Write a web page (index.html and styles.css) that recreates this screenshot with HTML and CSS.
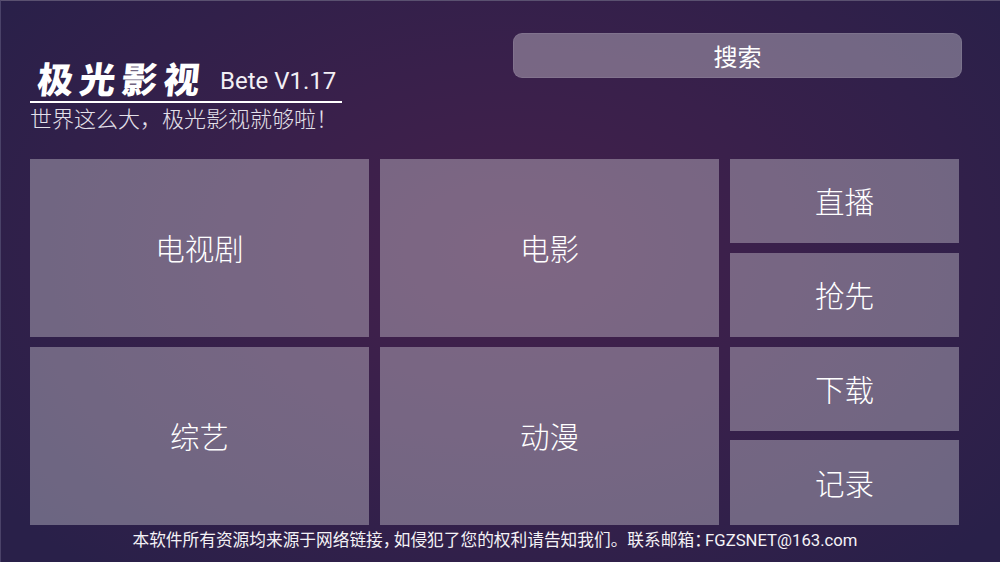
FILE: index.html
```html
<!DOCTYPE html>
<html lang="zh-CN">
<head>
<meta charset="utf-8">
<title>极光影视</title>
<link rel="stylesheet" href="styles.css">
</head>
<body>
<main class="screen">
  <header class="top">
    <div class="brand">
      <div class="brand-line">
        <span class="logo">极光影视</span>
        <span class="version">Bete V1.17</span>
      </div>
      <div class="slogan">世界这么大，极光影视就够啦！</div>
    </div>
    <div class="search">搜索</div>
  </header>
  <nav class="grid">
    <div class="tile large">电视剧</div>
    <div class="tile large">电影</div>
    <div class="stack">
      <div class="tile">直播</div>
      <div class="tile">抢先</div>
    </div>
    <div class="tile large">综艺</div>
    <div class="tile large">动漫</div>
    <div class="stack tight">
      <div class="tile">下载</div>
      <div class="tile">记录</div>
    </div>
  </nav>
  <footer class="foot"><span>本软件所有资源均来源于网络链接<span class="punct">，</span>如侵犯了您的权利请告知我们。联系邮箱<span class="punct">：</span>FGZSNET@163.com</span></footer>
</main>
</body>
</html>
```
FILE: styles.css
```css
* { box-sizing: border-box; }
html, body { margin: 0; height: 100%; }
body { overflow: hidden; background: #2a2048; }
.screen {
  width: 1000px;
  height: 562px;
  padding: 0 38px 0 30px;
  display: flex;
  flex-direction: column;
  color: #fff;
  font-family: Roboto, "Noto Sans CJK SC", sans-serif;
  background: radial-gradient(ellipse 640px 420px at 510px 250px, #44204b 0%, #39204b 45%, #292049 100%);
  border-top: 1px solid #5a5170;
  border-left: 1px solid #4a4268;
}
.top {
  height: 158px;
  display: flex;
  justify-content: space-between;
  align-items: flex-start;
  margin-left: -1px;
}
.brand { width: 312px; margin-top: 57px; }
.brand-line {
  height: 45px;
  display: flex;
  align-items: center;
  padding-left: 8px;
  border-bottom: 2px solid #fff;
}
.logo {
  width: 182px;
  flex: none;
  font-family: "Noto Sans CJK SC", sans-serif;
  font-size: 36px;
  font-weight: 900;
  line-height: 43px;
  letter-spacing: 6px;
  white-space: nowrap;
  transform: translateY(-2px) skewX(-6deg);
}
.version {
  font-size: 24px;
  line-height: 43px;
  padding-top: 3px;
  white-space: nowrap;
  color: #f2eff5;
}
.slogan {
  font-family: "Noto Sans CJK SC", sans-serif;
  font-size: 22px;
  font-weight: 300;
  line-height: 28px;
  white-space: nowrap;
  color: #e4e0ea;
}
.search {
  width: 449px;
  height: 45px;
  margin-top: 32px;
  display: flex;
  align-items: center;
  justify-content: center;
  font-family: "Noto Sans CJK SC", sans-serif;
  font-size: 24px;
  border-radius: 9px;
  border: 1px solid rgba(255,255,255,.08);
  background: rgba(255,255,255,.32);
}
.grid {
  display: grid;
  grid-template-columns: 339px 339px 229px;
  grid-template-rows: 178px 178px;
  column-gap: 11px;
  row-gap: 10px;
  margin-left: -1px;
}
.tile {
  display: flex;
  align-items: center;
  justify-content: center;
  flex: 1;
  padding-bottom: 2px;
  font-family: "Noto Sans CJK SC", sans-serif;
  font-size: 29.5px;
  font-weight: 300;
  background: rgba(255,255,255,.315);
}
.stack { display: flex; flex-direction: column; gap: 10px; }
.stack.tight { gap: 9px; }
.stack.tight .tile:first-child { flex: none; height: 84px; }
.foot {
  margin-left: -1px;
  margin-right: 2px;
  height: 28px;
  display: flex;
  align-items: center;
  justify-content: center;
  font-size: 16.7px;
  white-space: nowrap;
  color: #f4f2f6;
}
.punct { font-feature-settings: "halt"; margin-right: 2.6px; }
```
